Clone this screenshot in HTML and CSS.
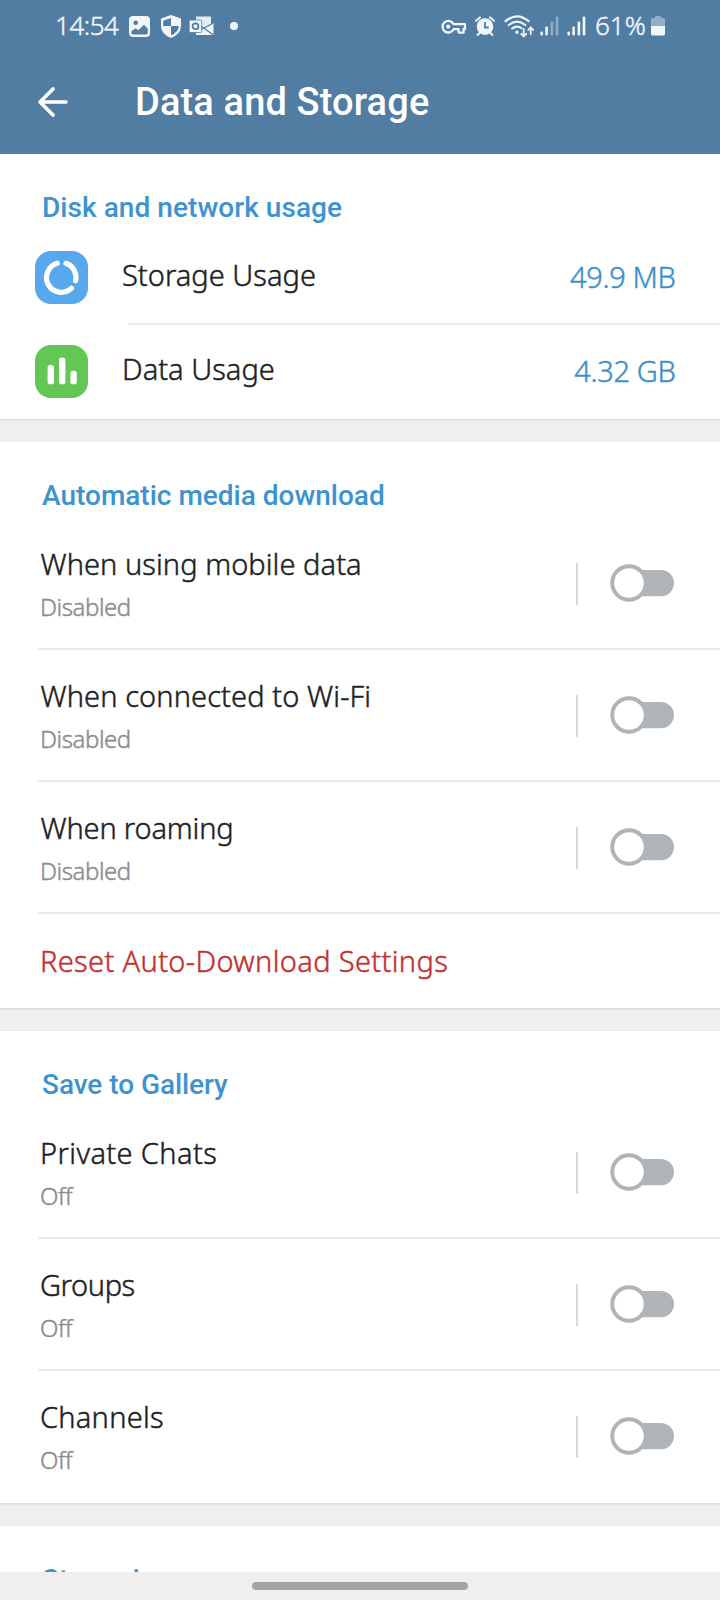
FILE: index.html
```html
<!DOCTYPE html>
<html lang="en">
<head>
<meta charset="utf-8">
<title>Data and Storage</title>
<link rel="stylesheet" href="styles.css">
</head>
<body>
<svg class="defs" width="0" height="0" aria-hidden="true">
  <symbol id="toggle" viewBox="0 0 66 40">
    <rect x="20" y="6.7" width="45" height="26.8" rx="13.4" fill="#afb4b9"/>
    <circle cx="19.3" cy="20" r="17" fill="#fff" stroke="#afb4b9" stroke-width="4"/>
  </symbol>
</svg>
<div class="screen">
  <header class="top">
    <div class="status">
      <span class="clock">14:54</span>
      <svg class="i-image" width="21" height="21" viewBox="0 0 21 21"><rect width="21" height="21" rx="4" fill="#f0f6fc"/><circle cx="6.7" cy="6.8" r="2.3" fill="#527da3"/><path d="M2.3 15.5L6.5 12.2L9.3 14.2L15 8.8L18.8 12.8V16.5Q18.8 18.5 16.8 18.5H4.5Q2.5 18.5 2.3 16.5Z" fill="#527da3"/></svg>
      <svg class="i-shield" width="20" height="23" viewBox="0 0 20 23"><path d="M10 0L20 3.6V11Q20 19 10 23Q0 19 0 11V3.6Z" fill="#f0f6fc"/><path d="M10 3L2.2 5.7V11H10ZM10 11H17.8Q17.5 17.2 10 20.4Z" fill="#527da3"/></svg>
      <svg class="i-mail" width="25" height="20" viewBox="0 0 25 20"><path d="M7 0.5H22V8L14 12.5L7 8Z" fill="#f0f6fc" opacity=".92"/><path d="M14.5 11.8L24.5 7V19H7V14.5Z" fill="#f0f6fc"/><path d="M12 10L24 18.8M12.5 13.5L24 7.2" stroke="#527da3" stroke-width="1.3"/><rect x=".2" y="4" width="12.5" height="12.5" rx="1" fill="#f0f6fc" stroke="#527da3" stroke-width=".8"/><circle cx="6.5" cy="10.2" r="2.9" fill="none" stroke="#527da3" stroke-width="1.8"/></svg>
      <svg class="i-dot" width="8" height="8" viewBox="0 0 8 8"><circle cx="4" cy="4" r="4" fill="#f0f6fc"/></svg>
      <svg class="i-key" width="26" height="16" viewBox="0 0 26 16"><path d="M12.6 5.2H24V10H22.6V13.6H17.6V10.2H12.6A5.8 5.8 0 1 1 12.6 5.2Z" fill="none" stroke="#f0f6fc" stroke-width="2.3" stroke-linejoin="round"/><circle cx="7.2" cy="7.7" r="2.1" fill="#f0f6fc"/></svg>
      <svg class="i-alarm" width="20" height="21" viewBox="0 0 20 21"><circle cx="10" cy="10.6" r="8.3" fill="#f0f6fc"/><path d="M1 4.8L5 1.4M19 4.8L15 1.4M4.6 17L2.6 19M15.4 17L17.4 19" stroke="#f0f6fc" stroke-width="2" stroke-linecap="round"/><path d="M10 6V11.5H13.8" fill="none" stroke="#527da3" stroke-width="1.8"/></svg>
      <svg class="i-wifi" width="31" height="23" viewBox="0 0 31 23"><g fill="none" stroke="#f0f6fc" stroke-width="2.2" stroke-linecap="round"><path d="M1.5 6.2Q13-3.6 24.6 6.2M4.8 10Q13 3.2 21.3 10M8.2 13.5Q13 9.7 17.4 13.2"/><path d="M19.7 14V21M17.2 18.8L19.7 21.4L22.2 18.8M26.7 19V13M24.2 15L26.7 12.4L29.2 15" stroke-width="1.8"/></g><circle cx="13" cy="17.3" r="1.7" fill="#f0f6fc"/></svg>
      <svg class="i-sig" width="19" height="20" viewBox="0 0 19 20" fill="#f0f6fc"><rect x=".4" y="15.5" width="2.6" height="4" rx="1"/><rect x="5.3" y="10.5" width="2.6" height="9" rx="1"/><g opacity=".4"><rect x="10.6" y="5.5" width="2.6" height="14" rx="1"/><rect x="15.7" y=".5" width="2.6" height="19" rx="1"/></g></svg>
      <svg class="i-sig2" width="19" height="20" viewBox="0 0 19 20" fill="#f0f6fc"><rect x=".4" y="15.5" width="2.6" height="4" rx="1"/><rect x="5.3" y="10.5" width="2.6" height="9" rx="1"/><rect x="10.6" y="5.5" width="2.6" height="14" rx="1"/><rect x="15.7" y=".5" width="2.6" height="19" rx="1"/></svg>
      <span class="charge">61%</span>
      <svg class="i-batt" width="14" height="20" viewBox="0 0 14 20"><path d="M4 2V1Q4 0 5 0H9Q10 0 10 1V2H12.5Q14 2 14 3.5V10H0V3.5Q0 2 1.500 2Z" fill="#f0f6fc" opacity=".4"/><path d="M0 10H14V18Q14 19.500 12.5 19.500H1.500Q0 19.500 0 18Z" fill="#f0f6fc"/></svg>
    </div>
    <div class="toolbar">
      <svg width="32" height="30" viewBox="0 0 32 30" fill="none" stroke="#fff" stroke-width="3.6" stroke-linecap="round" stroke-linejoin="round"><path d="M29 15H3M16 1.900L3 15L16 28.100"/></svg>
      <h1>Data and Storage</h1>
    </div>
  </header>

  <main>
    <section>
      <h2 class="tall">Disk and network usage</h2>
      <div class="usage">
        <svg width="53" height="53" viewBox="0 0 53 53"><rect width="53" height="53" rx="16" fill="#58a8ed"/><g fill="none" stroke="#fff" stroke-width="5.200" stroke-linecap="round"><path d="M31 12.300A14.800 14.800 0 0 1 40.600 29.700"/><path d="M22.300 12.300A14.800 14.800 0 1 0 36.600 37.200"/></g></svg>
        <div class="line">
          <span class="name ls-usage">Storage Usage</span><span class="value">49.9 MB</span>
        </div>
      </div>
      <div class="usage">
        <svg width="53" height="53" viewBox="0 0 53 53"><rect width="53" height="53" rx="16" fill="#62c754"/><g fill="#fff"><rect x="12.600" y="20" width="6.400" height="19.300" rx="2.600"/><rect x="24" y="12.600" width="6.400" height="26.700" rx="2.600"/><rect x="35.400" y="25.800" width="6.400" height="13.500" rx="2.600"/></g></svg>
        <div class="line">
          <span class="name ls-usage">Data Usage</span><span class="value">4.32 GB</span>
        </div>
      </div>
    </section>

    <section>
      <h2>Automatic media download</h2>
      <div class="option"><div class="text"><span class="name w ls-mobile">When using mobile data</span><span class="sub">Disabled</span></div><svg class="switch"><use href="#toggle"/></svg></div>
      <div class="option"><div class="text"><span class="name w ls-wifi">When connected to Wi-Fi</span><span class="sub">Disabled</span></div><svg class="switch"><use href="#toggle"/></svg></div>
      <div class="option"><div class="text"><span class="name w ls-roam">When roaming</span><span class="sub">Disabled</span></div><svg class="switch"><use href="#toggle"/></svg></div>
      <div class="reset"><span class="name ls-reset">Reset Auto-Download Settings</span></div>
    </section>

    <section>
      <h2 class="ls-save">Save to Gallery</h2>
      <div class="option"><div class="text"><span class="name ls-private">Private Chats</span><span class="sub ls-off">Off</span></div><svg class="switch"><use href="#toggle"/></svg></div>
      <div class="option"><div class="text"><span class="name ls-groups">Groups</span><span class="sub ls-off">Off</span></div><svg class="switch"><use href="#toggle"/></svg></div>
      <div class="option last"><div class="text"><span class="name ls-channels">Channels</span><span class="sub ls-off">Off</span></div><svg class="switch"><use href="#toggle"/></svg></div>
    </section>

    <section class="cut">
      <h2>Streaming</h2>
    </section>
  </main>

  <footer class="nav"><div class="pill"></div></footer>
</div>
</body>
</html>
```
FILE: styles.css
```css
* { box-sizing: border-box; margin: 0; }
body { background: #efefef; }
svg { display: block; flex: none; }
.defs { position: absolute; }

.screen {
  width: 720px;
  height: 1600px;
  overflow: hidden;
  display: flex;
  flex-direction: column;
  background: #efefef;
  font-family: "Noto Sans", "Open Sans", sans-serif;
  font-weight: 300;
  font-variant-ligatures: none;
  color: #202122;
}
.name, .value, .sub, .clock, .charge { -webkit-text-stroke: 0.45px currentColor; }

.top { height: 154px; flex: none; background: #527da3; color: #fff; }
.status { display: flex; height: 52px; align-items: flex-start; padding-left: 55px; color: #f0f6fc; }
.clock, .charge { font-size: 26px; line-height: 32px; margin-top: 9px; white-space: nowrap; }
.clock { width: 74px; letter-spacing: -0.45px; }
.charge { width: 55px; margin-left: 9px; letter-spacing: 0; }
.i-image { margin-top: 16px; }
.i-shield { margin: 15px 0 0 11px; }
.i-mail { margin: 16px 0 0 8px; }
.i-dot { margin: 22px 0 0 16px; }
.i-key { margin: 19px 0 0 203px; }
.i-alarm { margin: 16px 0 0 8px; }
.i-wifi { margin: 15px 0 0 9px; }
.i-sig { margin: 16px 0 0 5px; }
.i-sig2 { margin: 16px 0 0 8px; }
.i-batt { margin: 16px 0 0 1px; }

.toolbar { display: flex; height: 99px; align-items: center; padding: 1px 0 0 37px; }
.toolbar h1 { margin-left: 66px; font: 500 38px/48px Roboto, sans-serif; letter-spacing: 0.13px; }

main { flex: 1; min-height: 0; display: flex; flex-direction: column; gap: 23px; overflow: hidden; }
section { flex: none; background: #fff; box-shadow: 0 1px 2px rgba(0, 0, 0, 0.11); }
.cut { height: 60px; }
h2 {
  height: 76px;
  padding: 38px 0 0 42px;
  font: 500 28px/32px Roboto, sans-serif;
  color: #3d93cf;
}
.tall { height: 77px; letter-spacing: 0.06px; }
.ls-save { letter-spacing: -0.06px; }

.name { font-size: 29px; line-height: 40px; white-space: nowrap; }

.usage { display: flex; align-items: flex-start; height: 94px; padding-left: 35px; }
.usage > svg { margin-top: 20px; }
.line {
  flex: 1;
  display: flex;
  justify-content: space-between;
  height: 94px;
  margin-left: 40px;
  padding: 24px 44.5px 0 0;
  border-bottom: 2px solid #ebebeb;
}
.usage .name { margin-left: -6px; }
.usage + .usage .line { border-bottom: 0; }
.value { margin-top: 2px; font-size: 29px; line-height: 40px; letter-spacing: -0.35px; color: #3d8fca; }

.option {
  display: flex;
  justify-content: space-between;
  height: 132px;
  margin-left: 38px;
  padding: 26px 45px 0 2px;
  border-bottom: 2px solid #ebebeb;
}
.option.last { border-bottom: 0; }
.text { display: flex; flex-direction: column; gap: 7px; }
.sub { font-size: 24px; line-height: 32px; letter-spacing: -0.45px; color: #8a8d91; }
.w { margin-left: 0.5px; }
.switch { width: 99px; height: 42px; margin-top: 19px; padding: 0 0 2px 32px; border-left: 2px solid #d9d9d9; }

.reset { height: 94px; padding: 27px 0 0 40px; color: #c3302f; }

.ls-usage { letter-spacing: 0.03px; }
.ls-mobile { letter-spacing: 0.06px; }
.ls-wifi { letter-spacing: 0.1px; }
.ls-roam { letter-spacing: -0.17px; }
.ls-reset { letter-spacing: 0.35px; }
.ls-private { letter-spacing: 0.38px; }
.ls-groups { letter-spacing: -0.4px; }
.ls-channels { letter-spacing: 0.24px; }
.ls-off { letter-spacing: -0.4px; }

.nav { flex: none; height: 28px; background: #efefef; padding: 10px 0 0 252px; }
.pill { width: 216px; height: 8px; border-radius: 4px; background: #a5a5a5; }
```
